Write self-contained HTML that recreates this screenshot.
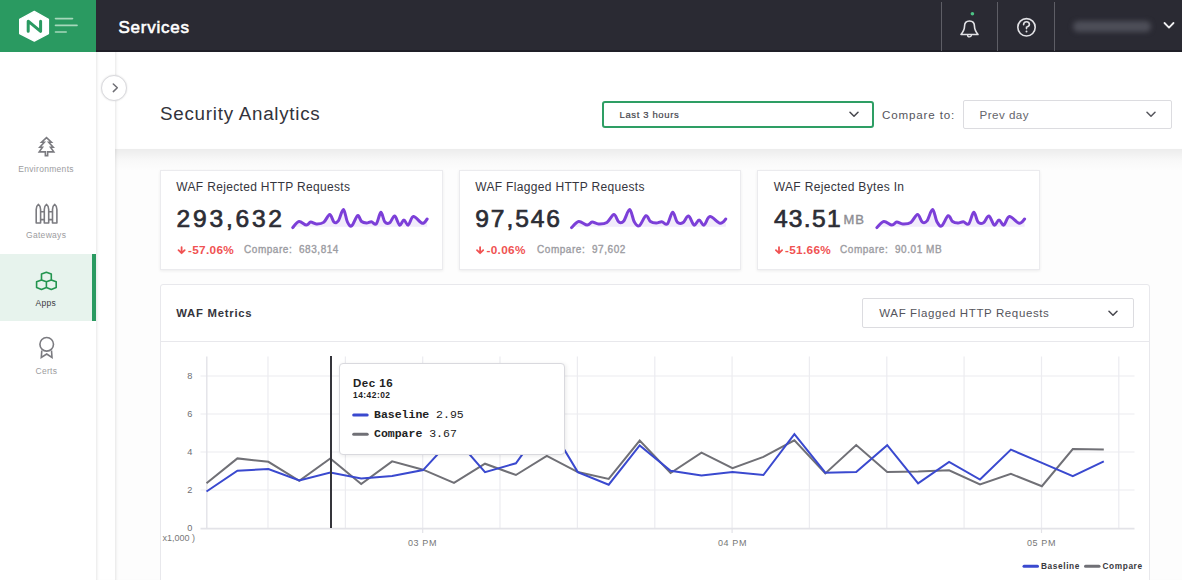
<!DOCTYPE html>
<html><head><meta charset="utf-8">
<style>
*{box-sizing:border-box;margin:0;padding:0}
html,body{width:1182px;height:580px;overflow:hidden;background:#fdfdfd;font-family:"Liberation Sans",sans-serif}
.a{position:absolute;white-space:nowrap;line-height:1}
#hdr{position:absolute;left:0;top:0;width:1182px;height:52px;background:#2a2a33;border-bottom:2px solid #1f1f27}
#logo{position:absolute;left:0;top:0;width:96px;height:52px;background:#2a9a61}
.sep{position:absolute;top:2px;width:1.2px;height:49px;background:#5e5e66}
#side{position:absolute;left:0;top:52px;width:96px;height:528px;background:#fff}
#col2{position:absolute;left:96px;top:52px;width:19px;height:528px;background:#fff;box-shadow:inset 3px 0 3px -2px rgba(0,0,0,.10)}
#main{position:absolute;left:115px;top:52px;width:1067px;height:528px;background:#fdfdfd;box-shadow:inset 3px 0 3px -2px rgba(0,0,0,.10)}
#phead{position:absolute;left:115px;top:52px;width:1067px;height:97px;background:#fff;box-shadow:inset 3px 0 3px -2px rgba(0,0,0,.10)}
#band{position:absolute;left:115px;top:149px;width:1067px;height:22px;background:linear-gradient(rgba(0,0,0,.065),rgba(0,0,0,.02) 50%,rgba(0,0,0,0))}
.card{position:absolute;top:170px;height:100px;background:#fff;border:1px solid #ebebee;box-shadow:0 1px 3px rgba(0,0,0,.07)}
.ctitle{font-size:12px;letter-spacing:0.33px;color:#35353d}
.big{font-size:24.6px;font-weight:normal;-webkit-text-stroke:0.7px #2c2d35;color:#2c2d35}
.pct{font-size:11.8px;letter-spacing:0.3px;font-weight:bold;color:#f05252}
.cmp{font-size:10px;color:#9c9ca2;-webkit-text-stroke:0.35px #9c9ca2;letter-spacing:0.55px}
#panel{position:absolute;left:160px;top:284px;width:990px;height:300px;background:#fff;border:1px solid #e8e8ec;border-radius:3px}
.dd{position:absolute;background:#fff;border:1px solid #dcdce0;border-radius:2px}
.ylab{font-size:9.2px;color:#6e6e72;text-align:right}
.xlab{font-size:9px;letter-spacing:0.6px;color:#777}
</style></head><body>
<div id="hdr"></div>
<div id="logo">
<svg width="96" height="52" style="position:absolute;left:0;top:0">
<path d="M34.3 11.4 L48.5 19.2 L48.5 33.6 L34.3 41.1 L19.6 33.6 L19.6 19.2 Z" fill="#fff" stroke="#fff" stroke-width="1.2" stroke-linejoin="round"/>
<path d="M28.2 31.3 V21.2 L40.6 31.3 V21.2" fill="none" stroke="#2a9a61" stroke-width="3" stroke-linecap="round" stroke-linejoin="round"/>
<g stroke="#a6d8bb" stroke-width="1.6" stroke-linecap="round">
<line x1="55.5" y1="18.6" x2="72.5" y2="18.6"/>
<line x1="55.5" y1="25.4" x2="77" y2="25.4"/>
<line x1="55.5" y1="32" x2="66.2" y2="32"/>
</g>
</svg>
</div>
<div class="a" id="t_services" style="left:118.5px;top:18.6px;font-size:17px;letter-spacing:0.75px;-webkit-text-stroke:0.6px #fff;color:#fff">Services</div>
<div class="sep" style="left:941px"></div>
<div class="sep" style="left:997px"></div>
<div class="sep" style="left:1054px"></div>
<svg width="1182" height="52" style="position:absolute;left:0;top:0">
<circle cx="972.4" cy="13.8" r="1.8" fill="#4cc485"/>
<path d="M961 34.5 Q964.5 30 964.5 26.5 Q964.5 21 969.5 21 Q974.5 21 974.5 26.5 Q974.5 30 978 34.5 Z" fill="none" stroke="#e2e2e6" stroke-width="1.6" stroke-linejoin="round"/>
<path d="M967.6 35 A1.9 1.9 0 0 0 971.4 35" fill="none" stroke="#e2e2e6" stroke-width="1.4"/>
<circle cx="1026.5" cy="27.3" r="8.7" fill="none" stroke="#e2e2e6" stroke-width="1.6"/>
<path d="M1023.6 24.8 Q1023.6 21.8 1026.5 21.8 Q1029.4 21.8 1029.4 24.5 Q1029.4 26.2 1026.5 27.3 V28.6" fill="none" stroke="#e2e2e6" stroke-width="1.6" stroke-linecap="round"/>
<circle cx="1026.5" cy="31.6" r="1" fill="#e2e2e6"/>
<path d="M1164.5 23 L1169 27.6 L1173.5 23" fill="none" stroke="#f0f0f2" stroke-width="1.8" stroke-linecap="round" stroke-linejoin="round"/>
</svg>
<div style="position:absolute;left:1073px;top:21px;width:78px;height:11px;border-radius:6px;background:#4d4e58;filter:blur(2.5px)"></div>

<div id="side">
</div>
<div id="main"></div>
<div id="col2"></div>
<div id="phead"></div><div id="band"></div>

<!-- sidebar items -->
<div style="position:absolute;left:0;top:254px;width:96px;height:67px;background:#e7f3ed"></div>
<div style="position:absolute;left:92px;top:254px;width:4px;height:67px;background:#2a9a61"></div>
<svg width="96" height="400" style="position:absolute;left:0;top:0">
<g fill="none" stroke="#7b7b80" stroke-width="1.6" stroke-linejoin="miter">
<path d="M46.5 137.6 L51.4 142.2 H48.7 L53.2 147.2 H50.5 L53.8 151.9 H47.65 V155.6 H45.35 V151.9 H39.2 L42.5 147.2 H39.8 L44.3 142.2 H41.6 Z"/>
<path d="M36.2 223 V209.5 Q36.2 206 38.4 204.4 Q40.6 206 40.6 209.5 V223 Z M44.3 223 V209.5 Q44.3 206 46.5 204.4 Q48.7 206 48.7 209.5 V223 Z M52.5 223 V209.5 Q52.5 206 54.7 204.4 Q56.9 206 56.9 209.5 V223 Z M40.6 211.8 H44.3 M40.6 219.6 H44.3 M48.7 211.8 H52.5 M48.7 219.6 H52.5" stroke-linejoin="round"/>
<circle cx="46.7" cy="344.3" r="6.8"/>
<path d="M41.8 350.5 L41.3 357.5 L46.7 354 L52 357.5 L51.5 350.5"/>
</g>
<g fill="none" stroke="#23954f" stroke-width="1.6" stroke-linejoin="round"><path d="M46.40 272.20 L51.30 274.10 V279.90 L46.40 281.80 L41.50 279.90 V274.10 Z M41.50 279.90 L46.40 281.80 V287.60 L41.50 289.50 L36.60 287.60 V281.80 Z M51.30 279.90 L56.20 281.80 V287.60 L51.30 289.50 L46.40 287.60 V281.80 Z"/></g>
</svg>
<div class="a" id="t_env" style="left:18.3px;top:164.6px;font-size:8.5px;letter-spacing:0.3px;color:#9c9ca0">Environments</div>
<div class="a" id="t_gw" style="left:26px;top:231.3px;font-size:8.5px;letter-spacing:0.3px;color:#9c9ca0">Gateways</div>
<div class="a" id="t_apps" style="left:35.5px;top:299.1px;font-size:8.5px;letter-spacing:0.3px;color:#3b3b42">Apps</div>
<div class="a" id="t_certs" style="left:35.5px;top:366.5px;font-size:8.5px;letter-spacing:0.3px;color:#9c9ca0">Certs</div>

<!-- collapse button -->
<div style="position:absolute;left:101.4px;top:74.7px;width:26px;height:26px;border-radius:50%;background:#fff;border:1px solid #d9d9dd;box-shadow:0 0 2px rgba(0,0,0,.12)"></div>
<svg width="20" height="20" style="position:absolute;left:105px;top:78px">
<path d="M8.3 6 L12.3 9.8 L8.3 13.6" fill="none" stroke="#6e6e74" stroke-width="1.5" stroke-linecap="round" stroke-linejoin="round"/>
</svg>

<!-- page head -->
<div class="a" id="t_title" style="left:160px;top:105.4px;font-size:18.8px;letter-spacing:0.74px;color:#33333b">Security Analytics</div>
<div class="dd" style="left:602px;top:101px;width:272px;height:27px;border:2px solid #2e9e64;border-radius:3px"></div>
<div class="a" id="t_last" style="left:619.5px;top:109.9px;font-size:9.5px;letter-spacing:0.63px;color:#45454c;-webkit-text-stroke:0.2px #45454c">Last 3 hours</div>
<svg width="12" height="8" style="position:absolute;left:849px;top:111px"><path d="M1 1.2 L5 5.2 L9 1.2" fill="none" stroke="#45454c" stroke-width="1.5" stroke-linecap="round" stroke-linejoin="round"/></svg>
<div class="a" id="t_cmpto" style="left:882px;top:109.1px;font-size:11.6px;letter-spacing:0.85px;color:#55555c">Compare to:</div>
<div class="dd" style="left:963px;top:100px;width:209px;height:29px;border-color:#dcdce0"></div>
<div class="a" id="t_prev" style="left:979.5px;top:109px;font-size:11.6px;letter-spacing:0.47px;color:#65656b">Prev day</div>
<svg width="12" height="8" style="position:absolute;left:1146px;top:111px"><path d="M1 1.2 L5 5.2 L9 1.2" fill="none" stroke="#55555c" stroke-width="1.5" stroke-linecap="round" stroke-linejoin="round"/></svg>

<!-- cards -->
<div class="card" style="left:160px;width:283px"></div>
<div class="card" style="left:459px;width:282px"></div>
<div class="card" style="left:757px;width:283px"></div>

<div class="a ctitle" id="c1t" style="top:181px;left:176.3px">WAF Rejected HTTP Requests</div>
<div class="a ctitle" id="c2t" style="top:181px;left:475.2px">WAF Flagged HTTP Requests</div>
<div class="a ctitle" id="c3t" style="top:181px;left:773.8px">WAF Rejected Bytes In</div>

<div class="a big" id="c1n" style="left:176.6px;top:207px;letter-spacing:2.75px">293,632</div>
<div class="a big" id="c2n" style="left:475.3px;top:207px;letter-spacing:1.9px">97,546</div>
<div class="a big" id="c3n" style="left:773.9px;top:207px;letter-spacing:1.3px">43.51</div>
<div class="a" id="c3mb" style="left:843.5px;top:212.5px;font-size:13px;letter-spacing:0.9px;color:#8e8e94;-webkit-text-stroke:0.4px #8e8e94">MB</div>

<div class="a pct" id="c1p" style="left:188px;top:245px">-57.06%</div>
<div class="a cmp" id="c1c" style="left:244px;top:244.8px">Compare:&nbsp; 683,814</div>
<div class="a pct" id="c2p" style="left:486.5px;top:245px">-0.06%</div>
<div class="a cmp" id="c2c" style="left:537px;top:244.8px">Compare:&nbsp; 97,602</div>
<div class="a pct" id="c3p" style="left:785px;top:245px">-51.66%</div>
<div class="a cmp" id="c3c" style="left:840px;top:244.8px">Compare:&nbsp; 90.01 MB</div>

<svg width="1182" height="300" style="position:absolute;left:0;top:0"><g fill="none" stroke="#f05252" stroke-width="1.8" stroke-linecap="round" stroke-linejoin="round"><path d="M181.6 247.2 V253 M178.5 250.2 L181.6 253.2 L184.7 250.2"/><path d="M480.1 247.2 V253 M477.0 250.2 L480.1 253.2 L483.2 250.2"/><path d="M779.0 247.2 V253 M775.9 250.2 L779.0 253.2 L782.1 250.2"/></g></svg>
<!-- metrics panel -->
<div id="panel"></div>
<div style="position:absolute;left:161px;top:341px;width:988px;height:1px;background:#e8e8ec"></div>
<div class="a" id="t_wafm" style="left:176.3px;top:307.8px;font-size:11.3px;letter-spacing:0.75px;font-weight:bold;color:#35353d">WAF Metrics</div>
<div class="dd" style="left:862px;top:298px;width:272px;height:30px"></div>
<div class="a" id="t_dd2" style="left:879.3px;top:308px;font-size:11.5px;letter-spacing:0.62px;color:#55555c">WAF Flagged HTTP Requests</div>
<svg width="12" height="8" style="position:absolute;left:1108px;top:310px"><path d="M1 1.2 L5 5.2 L9 1.2" fill="none" stroke="#45454c" stroke-width="1.5" stroke-linecap="round" stroke-linejoin="round"/></svg>

<!--SPARK--><svg width="1182" height="300" style="position:absolute;left:0;top:0"><path d="M292.7 227.6 C293.8 226.6 296.7 221.9 299.0 221.5 C301.3 221.1 304.4 225.0 306.4 225.1 C308.3 225.2 309.1 222.3 310.7 222.1 C312.3 221.9 314.0 223.8 316.2 223.9 C318.4 224.0 321.4 224.0 323.6 222.4 C325.9 220.8 328.0 214.6 329.7 214.5 C331.4 214.4 332.6 221.0 334.0 222.1 C335.4 223.2 336.7 223.0 338.3 220.9 C339.9 218.8 341.9 209.4 343.4 209.6 C344.9 209.8 346.1 219.4 347.5 222.1 C348.9 224.8 350.1 226.9 351.8 225.8 C353.5 224.7 356.0 216.4 357.6 215.7 C359.2 215.0 360.1 220.3 361.6 221.5 C363.1 222.7 364.9 223.0 366.5 223.1 C368.1 223.2 369.8 221.7 371.4 221.8 C373.0 221.9 374.7 225.5 376.3 223.9 C377.9 222.3 379.5 212.6 380.9 212.3 C382.3 212.0 383.4 220.4 384.9 222.1 C386.4 223.8 388.2 223.7 389.8 222.7 C391.4 221.7 393.1 215.6 394.7 216.0 C396.3 216.4 398.1 224.4 399.6 225.1 C401.1 225.8 402.5 219.9 403.9 219.9 C405.3 219.9 406.6 225.7 408.2 225.1 C409.8 224.5 411.0 216.9 413.4 216.6 C415.8 216.3 420.0 222.9 422.3 223.3 C424.6 223.7 426.4 219.7 427.2 219.0 L427.2 226.8 L292.7 226.8 Z" fill="#f2ecfb" stroke="none"/><path d="M292.7 227.6 C293.8 226.6 296.7 221.9 299.0 221.5 C301.3 221.1 304.4 225.0 306.4 225.1 C308.3 225.2 309.1 222.3 310.7 222.1 C312.3 221.9 314.0 223.8 316.2 223.9 C318.4 224.0 321.4 224.0 323.6 222.4 C325.9 220.8 328.0 214.6 329.7 214.5 C331.4 214.4 332.6 221.0 334.0 222.1 C335.4 223.2 336.7 223.0 338.3 220.9 C339.9 218.8 341.9 209.4 343.4 209.6 C344.9 209.8 346.1 219.4 347.5 222.1 C348.9 224.8 350.1 226.9 351.8 225.8 C353.5 224.7 356.0 216.4 357.6 215.7 C359.2 215.0 360.1 220.3 361.6 221.5 C363.1 222.7 364.9 223.0 366.5 223.1 C368.1 223.2 369.8 221.7 371.4 221.8 C373.0 221.9 374.7 225.5 376.3 223.9 C377.9 222.3 379.5 212.6 380.9 212.3 C382.3 212.0 383.4 220.4 384.9 222.1 C386.4 223.8 388.2 223.7 389.8 222.7 C391.4 221.7 393.1 215.6 394.7 216.0 C396.3 216.4 398.1 224.4 399.6 225.1 C401.1 225.8 402.5 219.9 403.9 219.9 C405.3 219.9 406.6 225.7 408.2 225.1 C409.8 224.5 411.0 216.9 413.4 216.6 C415.8 216.3 420.0 222.9 422.3 223.3 C424.6 223.7 426.4 219.7 427.2 219.0" fill="none" stroke="#7c3fd8" stroke-width="3" stroke-linecap="round" stroke-linejoin="round"/><path d="M571.5 227.6 C572.7 226.6 576.1 221.9 578.7 221.5 C581.3 221.1 585.0 225.0 587.2 225.1 C589.5 225.2 590.3 222.3 592.1 222.1 C594.0 221.9 596.0 223.8 598.5 223.9 C600.9 224.0 604.4 224.0 606.9 222.4 C609.5 220.8 612.0 214.6 613.9 214.5 C615.9 214.4 617.2 221.0 618.9 222.1 C620.5 223.2 622.0 223.0 623.8 220.9 C625.6 218.8 627.9 209.4 629.7 209.6 C631.4 209.8 632.8 219.4 634.4 222.1 C636.0 224.8 637.4 226.9 639.3 225.8 C641.2 224.7 644.1 216.4 646.0 215.7 C647.8 215.0 648.8 220.3 650.5 221.5 C652.2 222.7 654.3 223.0 656.2 223.1 C658.0 223.2 659.9 221.7 661.8 221.8 C663.7 221.9 665.6 225.5 667.4 223.9 C669.2 222.3 671.0 212.6 672.7 212.3 C674.3 212.0 675.6 220.4 677.3 222.1 C679.0 223.8 681.0 223.7 682.9 222.7 C684.8 221.7 686.6 215.6 688.5 216.0 C690.4 216.4 692.4 224.4 694.1 225.1 C695.9 225.8 697.4 219.9 699.1 219.9 C700.7 219.9 702.2 225.7 704.0 225.1 C705.8 224.5 707.3 216.9 710.0 216.6 C712.7 216.3 717.5 222.9 720.2 223.3 C722.8 223.7 724.9 219.7 725.8 219.0 L725.8 226.8 L571.5 226.8 Z" fill="#f2ecfb" stroke="none"/><path d="M571.5 227.6 C572.7 226.6 576.1 221.9 578.7 221.5 C581.3 221.1 585.0 225.0 587.2 225.1 C589.5 225.2 590.3 222.3 592.1 222.1 C594.0 221.9 596.0 223.8 598.5 223.9 C600.9 224.0 604.4 224.0 606.9 222.4 C609.5 220.8 612.0 214.6 613.9 214.5 C615.9 214.4 617.2 221.0 618.9 222.1 C620.5 223.2 622.0 223.0 623.8 220.9 C625.6 218.8 627.9 209.4 629.7 209.6 C631.4 209.8 632.8 219.4 634.4 222.1 C636.0 224.8 637.4 226.9 639.3 225.8 C641.2 224.7 644.1 216.4 646.0 215.7 C647.8 215.0 648.8 220.3 650.5 221.5 C652.2 222.7 654.3 223.0 656.2 223.1 C658.0 223.2 659.9 221.7 661.8 221.8 C663.7 221.9 665.6 225.5 667.4 223.9 C669.2 222.3 671.0 212.6 672.7 212.3 C674.3 212.0 675.6 220.4 677.3 222.1 C679.0 223.8 681.0 223.7 682.9 222.7 C684.8 221.7 686.6 215.6 688.5 216.0 C690.4 216.4 692.4 224.4 694.1 225.1 C695.9 225.8 697.4 219.9 699.1 219.9 C700.7 219.9 702.2 225.7 704.0 225.1 C705.8 224.5 707.3 216.9 710.0 216.6 C712.7 216.3 717.5 222.9 720.2 223.3 C722.8 223.7 724.9 219.7 725.8 219.0" fill="none" stroke="#7c3fd8" stroke-width="3" stroke-linecap="round" stroke-linejoin="round"/><path d="M876.9 227.6 C878.1 226.6 881.3 221.9 883.8 221.5 C886.3 221.1 889.8 225.0 891.9 225.1 C894.1 225.2 894.9 222.3 896.7 222.1 C898.5 221.9 900.3 223.8 902.7 223.9 C905.1 224.0 908.4 224.0 910.8 222.4 C913.3 220.8 915.6 214.6 917.5 214.5 C919.4 214.4 920.7 221.0 922.3 222.1 C923.8 223.2 925.3 223.0 927.0 220.9 C928.7 218.8 930.9 209.4 932.6 209.6 C934.3 209.8 935.5 219.4 937.1 222.1 C938.6 224.8 940.0 226.9 941.8 225.8 C943.6 224.7 946.4 216.4 948.2 215.7 C950.0 215.0 950.9 220.3 952.6 221.5 C954.2 222.7 956.1 223.0 957.9 223.1 C959.7 223.2 961.5 221.7 963.3 221.8 C965.1 221.9 967.0 225.5 968.7 223.9 C970.4 222.3 972.2 212.6 973.8 212.3 C975.3 212.0 976.5 220.4 978.1 222.1 C979.8 223.8 981.7 223.7 983.5 222.7 C985.3 221.7 987.1 215.6 988.9 216.0 C990.7 216.4 992.6 224.4 994.3 225.1 C996.0 225.8 997.4 219.9 999.0 219.9 C1000.6 219.9 1002.0 225.7 1003.7 225.1 C1005.5 224.5 1006.9 216.9 1009.4 216.6 C1012.0 216.3 1016.7 222.9 1019.2 223.3 C1021.7 223.7 1023.7 219.7 1024.6 219.0 L1024.6 226.8 L876.9 226.8 Z" fill="#f2ecfb" stroke="none"/><path d="M876.9 227.6 C878.1 226.6 881.3 221.9 883.8 221.5 C886.3 221.1 889.8 225.0 891.9 225.1 C894.1 225.2 894.9 222.3 896.7 222.1 C898.5 221.9 900.3 223.8 902.7 223.9 C905.1 224.0 908.4 224.0 910.8 222.4 C913.3 220.8 915.6 214.6 917.5 214.5 C919.4 214.4 920.7 221.0 922.3 222.1 C923.8 223.2 925.3 223.0 927.0 220.9 C928.7 218.8 930.9 209.4 932.6 209.6 C934.3 209.8 935.5 219.4 937.1 222.1 C938.6 224.8 940.0 226.9 941.8 225.8 C943.6 224.7 946.4 216.4 948.2 215.7 C950.0 215.0 950.9 220.3 952.6 221.5 C954.2 222.7 956.1 223.0 957.9 223.1 C959.7 223.2 961.5 221.7 963.3 221.8 C965.1 221.9 967.0 225.5 968.7 223.9 C970.4 222.3 972.2 212.6 973.8 212.3 C975.3 212.0 976.5 220.4 978.1 222.1 C979.8 223.8 981.7 223.7 983.5 222.7 C985.3 221.7 987.1 215.6 988.9 216.0 C990.7 216.4 992.6 224.4 994.3 225.1 C996.0 225.8 997.4 219.9 999.0 219.9 C1000.6 219.9 1002.0 225.7 1003.7 225.1 C1005.5 224.5 1006.9 216.9 1009.4 216.6 C1012.0 216.3 1016.7 222.9 1019.2 223.3 C1021.7 223.7 1023.7 219.7 1024.6 219.0" fill="none" stroke="#7c3fd8" stroke-width="3" stroke-linecap="round" stroke-linejoin="round"/></svg><!--/SPARK-->
<!--CHART--><svg width="1182" height="580" style="position:absolute;left:0;top:0"><line x1="200.5" y1="376.0" x2="1134.5" y2="376.0" stroke="#ececf0" stroke-width="1.2"/><line x1="200.5" y1="414.0" x2="1134.5" y2="414.0" stroke="#ececf0" stroke-width="1.2"/><line x1="200.5" y1="452.0" x2="1134.5" y2="452.0" stroke="#ececf0" stroke-width="1.2"/><line x1="200.5" y1="490.0" x2="1134.5" y2="490.0" stroke="#ececf0" stroke-width="1.2"/><line x1="268.0" y1="356.5" x2="268.0" y2="528" stroke="#ececf0" stroke-width="1.2"/><line x1="345.4" y1="356.5" x2="345.4" y2="528" stroke="#ececf0" stroke-width="1.2"/><line x1="422.7" y1="356.5" x2="422.7" y2="528" stroke="#ececf0" stroke-width="1.2"/><line x1="500.0" y1="356.5" x2="500.0" y2="528" stroke="#ececf0" stroke-width="1.2"/><line x1="577.4" y1="356.5" x2="577.4" y2="528" stroke="#ececf0" stroke-width="1.2"/><line x1="654.8" y1="356.5" x2="654.8" y2="528" stroke="#ececf0" stroke-width="1.2"/><line x1="732.1" y1="356.5" x2="732.1" y2="528" stroke="#ececf0" stroke-width="1.2"/><line x1="809.4" y1="356.5" x2="809.4" y2="528" stroke="#ececf0" stroke-width="1.2"/><line x1="886.8" y1="356.5" x2="886.8" y2="528" stroke="#ececf0" stroke-width="1.2"/><line x1="964.1" y1="356.5" x2="964.1" y2="528" stroke="#ececf0" stroke-width="1.2"/><line x1="1041.5" y1="356.5" x2="1041.5" y2="528" stroke="#ececf0" stroke-width="1.2"/><line x1="1118.8" y1="356.5" x2="1118.8" y2="528" stroke="#ececf0" stroke-width="1.2"/><line x1="206.8" y1="356.5" x2="206.8" y2="528" stroke="#e3e3e8" stroke-width="1.4"/><line x1="422.7" y1="528" x2="422.7" y2="533" stroke="#e3e3e8" stroke-width="1.2"/><line x1="732.1" y1="528" x2="732.1" y2="533" stroke="#e3e3e8" stroke-width="1.2"/><line x1="1041.5" y1="528" x2="1041.5" y2="533" stroke="#e3e3e8" stroke-width="1.2"/><line x1="200.5" y1="528.6" x2="1134.5" y2="528.6" stroke="#e3e3e8" stroke-width="1.6"/><polyline points="206.5,483.2 237.4,458.4 268.4,461.8 299.3,480.8 330.3,458.4 361.2,484.1 392.1,461.4 423.1,469.7 454.0,482.8 485.0,463.7 515.9,475.0 546.8,455.9 577.8,472.1 608.7,478.9 639.7,440.5 670.6,473.0 701.5,452.6 732.5,468.2 763.4,456.9 794.4,440.3 825.3,473.4 856.2,445.0 887.2,472.1 918.1,471.6 949.1,470.3 980.0,484.4 1010.9,473.9 1041.9,486.2 1072.8,449.0 1103.8,449.6" fill="none" stroke="#707076" stroke-width="2" stroke-linejoin="miter"/><polyline points="206.5,491.5 237.4,470.7 268.4,469.1 299.3,480.4 330.3,472.5 361.2,478.5 392.1,476.0 423.1,470.1 454.0,436.5 485.0,472.1 515.9,463.3 546.8,420.5 577.8,472.1 608.7,484.7 639.7,445.4 670.6,470.7 701.5,475.6 732.5,472.1 763.4,475.0 794.4,434.1 825.3,472.7 856.2,472.1 887.2,445.2 918.1,483.3 949.1,462.0 980.0,479.5 1010.9,449.6 1041.9,462.9 1072.8,476.1 1103.8,461.3" fill="none" stroke="#3a49cf" stroke-width="2" stroke-linejoin="miter"/><line x1="331" y1="356" x2="331" y2="528" stroke="#35353b" stroke-width="2"/><line x1="1024" y1="566.3" x2="1037.5" y2="566.3" stroke="#3a49cf" stroke-width="3" stroke-linecap="round"/><line x1="1085.5" y1="566.3" x2="1099" y2="566.3" stroke="#707076" stroke-width="3" stroke-linecap="round"/></svg><!--/CHART-->
<div class="a ylab" id="y8" style="left:179.4px;top:372.2px;width:13px">8</div>
<div class="a ylab" id="y6" style="left:179.4px;top:410.2px;width:13px">6</div>
<div class="a ylab" id="y4" style="left:179.4px;top:448.2px;width:13px">4</div>
<div class="a ylab" id="y2" style="left:179.4px;top:486.2px;width:13px">2</div>
<div class="a ylab" id="y0" style="left:179.4px;top:524.2px;width:13px">0</div>
<div class="a" id="t_x1000" style="left:162.5px;top:534.4px;font-size:9px;color:#777">x1,000 )</div>
<div class="a xlab" id="x03" style="left:408px;top:539px">03 PM</div>
<div class="a xlab" id="x04" style="left:718px;top:539px">04 PM</div>
<div class="a xlab" id="x05" style="left:1027px;top:539px">05 PM</div>
<div class="a" id="t_lb" style="left:1041px;top:561.7px;font-size:8.3px;letter-spacing:0.6px;font-weight:bold;color:#3a3a40">Baseline</div>
<div class="a" id="t_lc" style="left:1102.5px;top:561.7px;font-size:8.3px;letter-spacing:0.6px;font-weight:bold;color:#3a3a40">Compare</div>

<!-- tooltip -->
<div style="position:absolute;left:338.5px;top:363px;width:226px;height:91.8px;background:#fff;border:1px solid #d9d9de;border-radius:4px;box-shadow:1px 1px 4px rgba(0,0,0,.09)"></div>
<div class="a" id="t_dec" style="left:353px;top:378.3px;letter-spacing:0.5px;font-size:11.5px;font-weight:bold;color:#222">Dec 16</div>
<div class="a" id="t_time" style="left:353px;top:391.2px;font-size:8.4px;letter-spacing:0.5px;font-weight:bold;color:#222">14:42:02</div>
<svg width="1182" height="580" style="position:absolute;left:0;top:0"><line x1="353.7" y1="414.9" x2="367.2" y2="414.9" stroke="#3a49cf" stroke-width="3" stroke-linecap="round"/><line x1="353.7" y1="434.3" x2="367.2" y2="434.3" stroke="#707076" stroke-width="3" stroke-linecap="round"/></svg>
<div class="a" id="t_tb" style="left:374px;top:409px;font-size:11.5px;font-family:'Liberation Mono',monospace;color:#222"><b>Baseline</b> 2.95</div>
<div class="a" id="t_tc" style="left:374px;top:427.7px;font-size:11.5px;font-family:'Liberation Mono',monospace;color:#222"><b>Compare</b> 3.67</div>

</body></html>
